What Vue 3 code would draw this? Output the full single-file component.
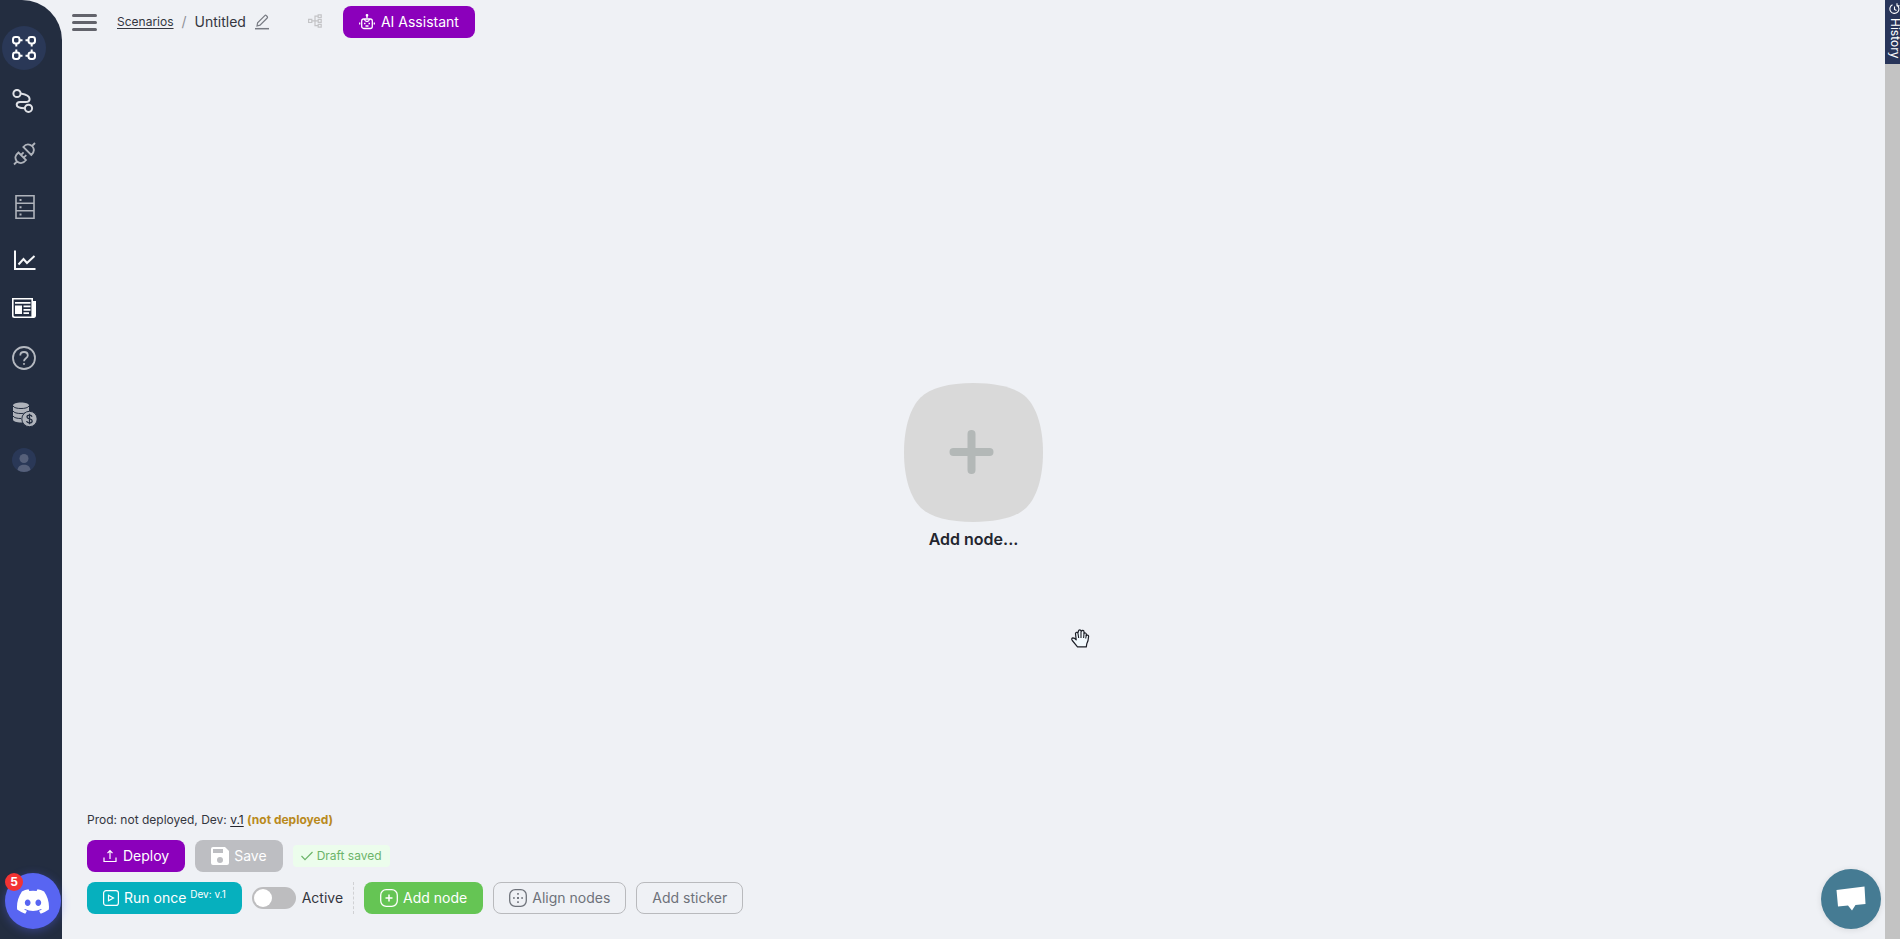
<script setup>
  import {ref} from 'vue';

  // === state ===
  const scenarioName = ref("Untitled");
  const active = ref(false);
  const unread = ref(5);
</script>

<template>
  <div class="app">
    <!-- sidebar -->
    <aside class="sidebar">
      <nav class="menu">
        <a class="menu__item menu__item--active" href="#" aria-label="Scenarios">
          <svg width="24" height="24" viewBox="0 0 24 24" fill="none" stroke="#fff" stroke-width="2">
            <rect x="1" y="1" width="6.5" height="6.5" rx="2.4"/>
            <rect x="16.5" y="1" width="6.5" height="6.5" rx="2.4"/>
            <rect x="1" y="16.5" width="6.5" height="6.5" rx="2.4"/>
            <rect x="16.5" y="16.5" width="6.5" height="6.5" rx="2.4"/>
            <path d="M7.5 4.3h3M13.5 4.3h3M7.5 19.7h3M13.5 19.7h3M4.3 7.5v3M4.3 13.5v3M19.7 7.5v3M19.7 13.5v3"/>
          </svg>
        </a>
        <a class="menu__item" href="#" aria-label="Executions">
          <svg width="24" height="24" viewBox="0 0 24 24" fill="none" stroke="#dfe1e6" stroke-width="2">
            <circle cx="5" cy="4.5" r="3.6"/>
            <circle cx="16.500" cy="19.300" r="3.600"/>
            <path d="M8.600 4.600C14 5.500 17.600 7 17.600 10c0 2-1.400 3-4 3H8c-2.200 0-3.300 1.200-3.300 2.800 0 2.400 3 3.400 8 3.500"/>
          </svg>
        </a>
        <a class="menu__item" href="#" aria-label="Connections">
          <svg width="24" height="24" viewBox="0 0 24 24" fill="none" stroke="#afb3bb" stroke-width="1.8">
            <path d="M2 22.500l3-3M20 4l3-3M5 19.500c-2.600-3.200-2-6.200 1.500-9l7.500 7.500c-2.600 3.400-5.800 4-9 1.500zM20.300 4.200c2.600 3.200 2 6-1 8.800l-8-8c2.500-3 5.900-3.300 9-.8zM9 13l2.600-2.600M11.700 15.700l2.600-2.600"/>
          </svg>
        </a>
        <a class="menu__item" href="#" aria-label="Database">
          <svg width="24" height="24" viewBox="0 0 24 24" fill="none" stroke="#afb3bb" stroke-width="1.6">
            <path d="M4 .8h18v22.400H4zM4 8.300h18M4 15.700h18"/>
            <path d="M7.500 5h2M7.500 12.300h2M7.500 19.500h2" stroke-width="2"/>
          </svg>
        </a>
        <a class="menu__item" href="#" aria-label="Statistics">
          <svg width="24" height="24" viewBox="0 0 24 24" fill="none" stroke="#f6f7f9" stroke-width="2">
            <path d="M3 2.500V21h20.500M6.500 16.500l5-5.500 3.500 4 7.500-7"/>
          </svg>
        </a>
      </nav>
      <nav class="menu menu--help">
        <a class="menu__item" href="#" aria-label="News">
          <svg width="24" height="24" viewBox="0 0 24 24">
            <path fill="#fff" fill-rule="evenodd" d="M0 2h21v3h3v14.500c0 1.500-.8 2.500-2.200 2.500H2.200C.8 22 0 21.200 0 19.800zm1.600 1.600V19c0 1 .4 1.400 1.200 1.400H19.400V3.600z"/>
            <path fill="#fff" d="M3 6h15.500v1.800H3zM3 9.500h7v8.500H3zM11.500 9.500h7v1.800h-7zM11.500 13h7v1.700h-7zM11.500 16.300h5.500V18h-5.500z"/>
          </svg>
        </a>
        <a class="menu__item" href="#" aria-label="Help">
          <svg width="24" height="24" viewBox="0 0 24 24" fill="none" stroke="#b5b9c0" stroke-width="1.800">
            <circle cx="12" cy="12" r="11"/>
            <path d="M8.300 9.500c0-2.200 1.600-3.500 3.700-3.500s3.800 1.300 3.800 3.400c0 2.800-3.800 2.800-3.800 5.800"/>
            <circle cx="12" cy="17.900" r=".6" fill="#b5b9c0" stroke-width="1"/>
          </svg>
        </a>
      </nav>
      <nav class="menu menu--account">
        <a class="menu__item" href="#" aria-label="Billing">
          <svg width="25" height="25" viewBox="0 0 25 25">
            <path fill="#afb3bb" d="M1 3.500C1 1.600 4.600.5 9 .5s8 1.100 8 3v14c0 1.900-3.600 3-8 3s-8-1.100-8-3z"/>
            <path fill="none" stroke="#232d40" d="M1 4c1 1.800 4.200 2.500 8 2.500s7-.7 8-2.500M1 9c1 1.800 4.200 2.500 8 2.500s7-.7 8-2.500M1 14c1 1.800 4.200 2.500 8 2.500"/>
            <circle cx="17.500" cy="17" r="7.700" fill="#afb3bb" stroke="#232d40"/>
            <path fill="none" stroke="#232d40" stroke-width="1.300" d="M20 14.700c-.3-1-1.200-1.500-2.500-1.500-1.500 0-2.500.7-2.500 1.800 0 2.700 5.200 1.200 5.200 4 0 1.100-1.200 1.900-2.700 1.900s-2.600-.7-2.800-1.900M17.500 11.700v10.600"/>
          </svg>
        </a>
        <a class="menu__item" href="#" aria-label="Profile">
          <svg width="24" height="24" viewBox="0 0 24 24">
            <circle cx="12" cy="12" r="12" fill="#2a3857"/>
            <circle cx="12" cy="10.500" r="4.500" fill="#56607a"/>
            <path fill="#56607a" d="M5.500 22c.4-3.500 3-5.300 6.500-5.300s6.100 1.800 6.500 5.300A12 12 0 0 1 12 24a12 12 0 0 1-6.500-2z"/>
          </svg>
        </a>
      </nav>
      <a class="discord" href="#" aria-label="Discord">
        <svg width="32" height="25" viewBox="0 0 127.140 96.360">
          <path fill="#fff" d="M107.700 8.070A105.150 105.150 0 0 0 81.470 0a72.060 72.060 0 0 0-3.360 6.830 97.680 97.680 0 0 0-29.110 0A72.370 72.370 0 0 0 45.640 0a105.890 105.890 0 0 0-26.250 8.090C2.790 32.650-1.710 56.600.540 80.210a105.730 105.730 0 0 0 32.170 16.150 77.700 77.700 0 0 0 6.890-11.110 68.420 68.420 0 0 1-10.850-5.180c.910-.660 1.800-1.340 2.660-2a75.570 75.570 0 0 0 64.320 0c.870.710 1.760 1.390 2.660 2a68.680 68.680 0 0 1-10.870 5.190 77 77 0 0 0 6.890 11.100 105.250 105.250 0 0 0 32.190-16.140c2.640-27.380-4.510-51.110-18.900-72.150zM42.450 65.690c-6.270 0-11.450-5.690-11.450-12.690s5-12.740 11.430-12.740S54 46 53.890 53s-5.050 12.690-11.440 12.690zm42.240 0c-6.280 0-11.440-5.690-11.440-12.690s5-12.740 11.440-12.740S96.230 46 96.120 53s-5.040 12.690-11.430 12.690z"/>
        </svg>
        <span class="discord__badge">{{ unread }}</span>
      </a>
    </aside>

    <main class="canvas">
      <!-- top bar -->
      <header class="topbar">
        <button class="burger" type="button" aria-label="Menu">
          <span></span><span></span><span></span>
        </button>
        <a class="topbar__link" href="#">Scenarios</a>
        <span class="topbar__slash">/</span>
        <span class="topbar__name">{{ scenarioName }}</span>
        <button class="icon-btn icon-btn--edit" type="button" aria-label="Rename">
          <svg width="16" height="16" viewBox="0 0 16 16" fill="none" stroke="#777a82" stroke-width="1.200">
            <path d="M3 12l.6-3.200L10.800 1.600c.5-.5 1-.5 1.500 0l.900.900c.5.5.5 1 0 1.500L6 11.200z"/>
            <path d="M1 14.700h14" stroke-width="1.500"/>
          </svg>
        </button>
        <button class="icon-btn icon-btn--tree" type="button" aria-label="Structure">
          <svg width="14" height="14" viewBox="0 0 14 14" fill="none" stroke="#c3c4c6" stroke-width="1.200">
            <path d="M.6 5.300h3.200v3.200H.6zM10.200.8h3v2.800h-3zM10.200 5.500h3v2.800h-3zM10.200 10.300h3v2.800h-3zM3.800 6.900h6.400M10.200 2.200H7v9.500h3.200"/>
          </svg>
        </button>
        <button class="btn btn--purple" type="button">
          <svg width="16" height="16" viewBox="0 0 16 16" fill="none" stroke="#fff" stroke-width="1.300">
            <rect x="2.700" y="5" width="10.600" height="9.500" rx="2"/>
            <path d="M8 1.500v2.800M.7 8.500v2M15.300 8.500v2M5.500 5c.3 1.800 1.200 2.500 2.500 2.500s2.200-.7 2.500-2.500M5 9.500h1.500M9.500 9.500H11M6.500 12h3"/>
            <circle cx="8" cy="1.300" r=".7"/>
          </svg>
          AI Assistant
        </button>
      </header>

      <!-- empty node -->
      <button class="node" type="button">
        <svg width="139" height="139" viewBox="0 0 139 139">
          <path fill="#d9d9d9" d="M69.500 0C94 0 113 5 122.500 14.500S139 43 139 69.500s-7 45.500-16.500 55S94 139 69.500 139s-43.500-5-53-14.500S0 96 0 69.500 7 24 16.500 14.500 45 0 69.500 0z"/>
          <path fill="none" stroke="#b3b8b7" stroke-width="8" stroke-linecap="round" d="M67.500 51v36M49.500 69h36"/>
        </svg>
        <span class="node__label">Add node...</span>
      </button>

      <!-- hand pointer lying on the canvas -->
      <svg class="hand" width="19" height="19" viewBox="0 0 19 19">
        <path fill="#f2f9fd" stroke="#1c1e26" stroke-width="1.200" stroke-linejoin="round" d="M6.500 17.800L1.300 11.500c-1-1.300-.5-2.500.7-2.600 1.200 0 2.100.7 3.200 2L4.500 4.800c-.1-1.700 1.900-2.100 2.300-.6L7.500 2c.2-1.600 2.300-1.600 2.500 0l.500.300c.4-1.300 2.400-1.100 2.500.500v1.700c.7-1 2.400-.6 2.300.900v1.200c.7-.9 2.400-.6 2.300.9-.2 4-.6 5-1.800 7.200l-.5 3.100z"/>
        <path fill="none" stroke="#1c1e26" stroke-width="1.100" d="M7 4.500l.700 4.500M10 2.500V9M13 4.500L12.600 9M15.300 6l-.6 3.500"/>
      </svg>

      <!-- bottom controls -->
      <footer class="controls">
        <p class="version">Prod: not deployed, Dev: <a href="#">v.1</a> <strong>(not deployed)</strong></p>
        <div class="controls__row">
          <button class="btn btn--purple" type="button">
            <svg width="14" height="14" viewBox="0 0 14 14" fill="none" stroke="#fff" stroke-width="1.200">
              <path d="M1 8.500v4h12v-4M7 10V2M4.500 4.200L7 1.700l2.500 2.500"/>
            </svg>
            Deploy
          </button>
          <button class="btn btn--grey" type="button" disabled>
            <svg width="18" height="18" viewBox="0 0 18 18">
              <path fill="#fff" fill-rule="evenodd" d="M2 0h12l4 4v12a2 2 0 0 1-2 2H2a2 2 0 0 1-2-2V2a2 2 0 0 1 2-2zm0 2v4h10V2zm7 8a3 3 0 1 0 0 6 3 3 0 0 0 0-6z"/>
            </svg>
            Save
          </button>
          <span class="draft">
            <svg width="12" height="10" viewBox="0 0 12 10" fill="none" stroke="#6cb46a" stroke-width="1.200">
              <path d="M.5 5l3.500 3.700L11.500 1"/>
            </svg>
            Draft saved
          </span>
        </div>
        <div class="controls__row">
          <button class="btn btn--teal" type="button">
            <svg width="16" height="16" viewBox="0 0 16 16" fill="none" stroke="#fff" stroke-width="1.200">
              <rect x=".6" y=".6" width="14.800" height="14.800" rx="2.500"/>
              <path d="M5.500 5.200v5.600L10.500 8z"/>
            </svg>
            <span>Run once <sup>Dev: v.1</sup></span>
          </button>
          <label class="switch">
            <input type="checkbox" v-model="active">
            Active
          </label>
          <span class="divider"></span>
          <button class="btn btn--green" type="button">
            <svg width="18" height="18" viewBox="0 0 18 18" fill="none" stroke="#fff" stroke-width="1.300">
              <rect x=".7" y=".7" width="16.600" height="16.600" rx="5.500"/>
              <path d="M9 5.500v7M5.500 9h7" stroke-width="1.500"/>
            </svg>
            Add node
          </button>
          <button class="btn btn--outline" type="button">
            <svg width="18" height="18" viewBox="0 0 18 18" fill="none" stroke="#6e727a" stroke-width="1.300">
              <rect x=".7" y=".7" width="16.600" height="16.600" rx="5.500"/>
              <path d="M9 4v1.800M9 8v2M9 12.200V14M4 9h1.800M8 9h2M12.200 9H14" stroke-width="1.600"/>
            </svg>
            Align nodes
          </button>
          <button class="btn btn--outline" type="button">Add sticker</button>
        </div>
      </footer>

      <button class="chat" type="button" aria-label="Chat">
        <svg width="30" height="26" viewBox="0 0 30 26">
          <path fill="#fff" d="M.5 4L28.500.5l1 17.500-10 1-3.500 5.500-4-5L2 20.500z"/>
        </svg>
      </button>
    </main>

    <!-- right strip -->
    <aside class="strip">
      <button class="history" type="button">
        <svg width="11" height="12" viewBox="0 0 11 12" fill="none" stroke="#fff" stroke-width="1.100">
          <path d="M8 2.200a4.500 4.500 0 1 1-4.500-.4M8 .3v2.500h2.500M5.500 3.500v3l2 1"/>
        </svg>
        History
      </button>
    </aside>
  </div>
</template>

<style>
  body{
    margin: 0;
    background-color: #eff1f5;
  }
</style>

<style scoped>
  .app{
    display: flex;
    min-height: 100vh;
    font-family: Inter, sans-serif;
    font-size: 14px;
    line-height: 20px;
    color: #34363f;
    background-color: #eff1f5;
  }

  button{
    font: inherit;
    cursor: pointer;
  }

  svg{
    display: block;
    flex: none;
  }

  /* === sidebar === */
  .sidebar{
    display: flex;
    flex-direction: column;
    flex: none;
    box-sizing: border-box;
    width: 62px;
    padding: 22px 0 10px 2px;
    border-top-right-radius: 40px;
    background-color: #232d40;
  }

  .menu{
    display: flex;
    flex-direction: column;
    gap: 9px;
    padding: 4px 0 0;
  }

  .menu--help{
    gap: 6px;
    padding: 4px 0 3px;
  }

  .menu--account{
    gap: 2px;
    padding: 9px 0;
  }

  .menu__item{
    display: flex;
    align-items: center;
    justify-content: center;
    width: 44px;
    height: 44px;
    border-radius: 50%;
  }

  .menu__item--active{
    background-color: #2a3857;
  }

  .discord{
    position: relative;
    display: flex;
    align-items: center;
    justify-content: center;
    width: 56px;
    height: 56px;
    margin: auto 0 0 3px;
    border-radius: 50%;
    background-color: #5865f2;
    box-shadow: 0 2px 10px rgba(88, 101, 242, 0.4);
  }

  .discord__badge{
    position: absolute;
    top: 0;
    left: 0;
    width: 18px;
    height: 18px;
    border-radius: 50%;
    background-color: #f23333;
    color: #fff;
    font-size: 12px;
    font-weight: 700;
    line-height: 18px;
    text-align: center;
  }

  /* === canvas === */
  .canvas{
    position: relative;
    display: grid;
    grid-template-rows: auto 1fr auto;
    flex: 1;
    min-width: 0;
  }

  .topbar{
    grid-area: 1 / 1;
    display: flex;
    align-items: center;
    padding: 6px 10px;
  }

  .burger{
    display: flex;
    flex-direction: column;
    gap: 4px;
    width: 25px;
    margin-right: 20px;
    padding: 0;
    border: 0;
    background: none;
  }

  .burger span{
    height: 3px;
    border-radius: 2px;
    background-color: #62636b;
  }

  .topbar__link{
    color: #34363f;
    font-size: 12px;
    text-underline-offset: 2px;
  }

  .topbar__slash{
    margin: 0 8px;
    color: #8e9097;
  }

  .icon-btn{
    padding: 0;
    border: 0;
    background: none;
  }

  .icon-btn--edit{
    margin: 0 38px 0 8px;
  }

  .icon-btn--tree{
    margin-right: 21px;
    padding-bottom: 3px;
  }

  .node{
    grid-area: 1 / 1 / 4 / 2;
    place-self: center;
    display: flex;
    flex-direction: column;
    align-items: center;
    gap: 7px;
    padding: 0 0 8px;
    border: 0;
    background: none;
  }

  .node__label{
    color: #23252e;
    font-size: 16px;
    font-weight: 600;
  }

  .hand{
    position: absolute;
    top: 67%;
    left: 55.350%;
  }

  /* === buttons === */
  .btn{
    display: flex;
    align-items: center;
    gap: 5px;
    box-sizing: border-box;
    height: 32px;
    padding: 0 16px;
    border: 0;
    border-radius: 8px;
    color: #fff;
    white-space: nowrap;
  }

  .btn--purple{
    gap: 6px;
    background-color: #8b00bb;
  }

  .btn--grey{
    background-color: #bdbec2;
  }

  .btn--teal{
    background-color: #06b0be;
  }

  .btn--green{
    background-color: #65c554;
  }

  .btn--outline{
    padding: 0 15px;
    border: 1px solid #b9babd;
    background: none;
    color: #6e727a;
  }

  .btn sup{
    font-size: 10px;
    line-height: 1;
    vertical-align: 5px;
  }

  /* === bottom controls === */
  .controls{
    grid-area: 3 / 1;
    display: flex;
    flex-direction: column;
    gap: 10px;
    padding: 0 25px;
    margin-bottom: 25px;
  }

  .controls__row{
    display: flex;
    align-items: center;
    gap: 10px;
  }

  .version{
    margin: 0;
    font-size: 12px;
  }

  .version a{
    color: #23252e;
    text-underline-offset: 2px;
  }

  .version strong{
    color: #b98a1c;
  }

  .draft{
    display: flex;
    align-items: center;
    gap: 4px;
    padding: 1px 8px;
    border-radius: 4px;
    background-color: #ecfdec;
    color: #6cb46a;
    font-size: 12px;
  }

  .switch{
    display: flex;
    align-items: center;
    gap: 6px;
  }

  .switch input{
    appearance: none;
    display: flex;
    align-items: center;
    box-sizing: border-box;
    width: 44px;
    height: 22px;
    margin: 0;
    padding: 0 2px;
    border-radius: 11px;
    background-color: #bdbdbf;
  }

  .switch input::before{
    content: "";
    width: 18px;
    height: 18px;
    border-radius: 50%;
    background-color: #fff;
  }

  .switch input:checked{
    justify-content: flex-end;
    background-color: #65c554;
  }

  .divider{
    height: 32px;
    border-left: 1px dashed #d0d1d4;
  }

  /* === chat === */
  .chat{
    position: absolute;
    right: 4px;
    bottom: 10px;
    display: flex;
    align-items: center;
    justify-content: center;
    width: 60px;
    height: 60px;
    padding: 0;
    border: 0;
    border-radius: 50%;
    background-color: #457b93;
    box-shadow: 0 1px 6px rgba(0, 0, 0, 0.1);
  }

  /* === right strip === */
  .strip{
    flex: none;
    width: 15px;
    background-color: #c3c3c3;
  }

  .history{
    display: flex;
    align-items: center;
    gap: 3px;
    box-sizing: border-box;
    width: 15px;
    height: 64px;
    padding: 3px 0 3px 4px;
    border: 0;
    background-color: #28355a;
    color: #fff;
    font-size: 12px;
    line-height: 12px;
    writing-mode: vertical-rl;
  }
</style>
